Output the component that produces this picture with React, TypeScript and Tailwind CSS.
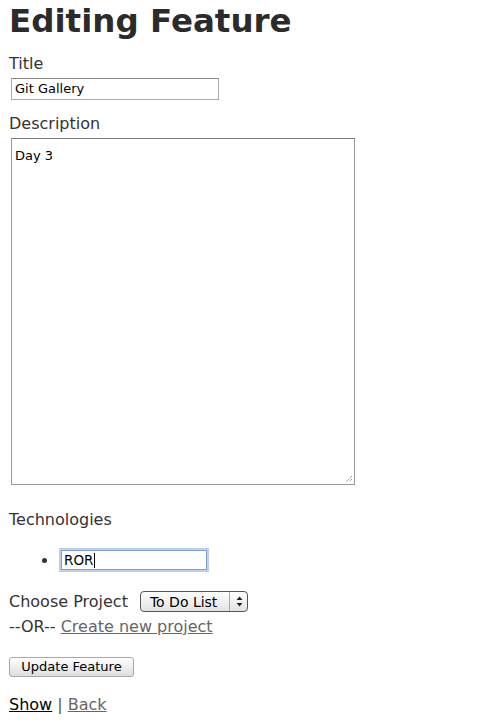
export default function App() {
  return (
    <div className="min-h-[726px] bg-white pl-[9px] pt-[3px] text-[#333] [font-family:'DejaVu_Sans',Verdana,sans-serif]">
      <h1 className="text-[32.5px] font-bold leading-[37px] text-[#2b2b2b]">Editing Feature</h1>

      <form className="mt-[15px]">
        <label className="block text-[16px] leading-[18px]">Title</label>
        <div className="mt-[5px] ml-[2px] flex h-[22px] w-[208px] items-center border border-[#aaa] border-t-[#8a8a8a] px-[3px] text-[13px] text-black">
          Git Gallery
        </div>

        <label className="mt-[15px] block text-[16px] leading-[18px]">Description</label>
        <div className="relative mt-[5px] ml-[2px] h-[347px] w-[344px] border border-[#999] border-t-[#777] px-[3px] pt-[7px] text-[13px] text-black">
          Day 3
          <svg className="absolute bottom-[1px] right-[1px]" width="9" height="9" viewBox="0 0 9 9">
            <path d="M8 2 L2 8 M8 5 L5 8" stroke="#777" strokeWidth="1" strokeDasharray="1 1" />
          </svg>
        </div>

        <label className="mt-[26px] block text-[16px] leading-[18px]">Technologies</label>
        <ul className="mt-[21px] ml-[33px] flex items-center gap-[14px]">
          <li className="h-[5px] w-[5px] rounded-full bg-[#333]" />
          <li className="flex h-[20px] w-[146px] items-center border border-[#7fa3d4] px-[2px] text-[13.5px] text-black shadow-[0_0_0_2px_rgba(120,160,220,0.5)]">
            ROR<span className="ml-[1px] inline-block h-[15px] w-px bg-black" />
          </li>
        </ul>

        <div className="mt-[21px] flex items-center text-[16px] leading-[18px]">
          <span>Choose Project</span>
          <div className="ml-[12px] flex h-[21px] w-[108px] items-center justify-between rounded-[4px] border border-[#555] bg-gradient-to-b from-white to-[#e3e3e3] pl-[9px] pr-[4px] text-[14px] text-black">
            <span>To Do List</span>
            <span className="flex h-full items-center border-l border-[#aaa] pl-[6px]">
              <svg width="7" height="11" viewBox="0 0 7 11">
                <path d="M3.5 0.5 L6.5 4 L0.5 4 Z M3.5 10.5 L6.5 7 L0.5 7 Z" fill="#222" />
              </svg>
            </span>
          </div>
        </div>
        <p className="mt-[6px] text-[16px] leading-[18px]">
          --OR-- <a className="text-[#666] underline">Create new project</a>
        </p>

        <button
          type="button"
          className="mt-[21px] flex h-[20px] w-[125px] items-center justify-center rounded-[3px] border border-[#a8a8a8] bg-gradient-to-b from-white to-[#dedede] text-[13px] text-black"
        >
          Update Feature
        </button>
      </form>

      <p className="mt-[19px] text-[16px] leading-[18px]">
        <a className="text-black underline">Show</a> <span className="text-[#555]">|</span>{" "}
        <a className="text-[#666] underline">Back</a>
      </p>
    </div>
  );
}
